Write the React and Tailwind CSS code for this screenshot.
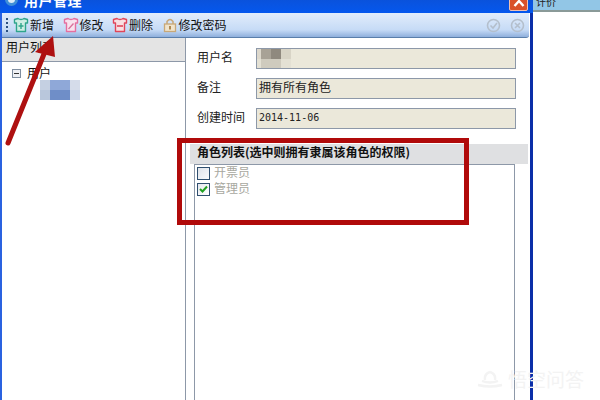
const ShirtIcon = ({ color, fill, children }) => (
  <svg width="16" height="16" viewBox="0 0 16 16" className="shrink-0">
    <path d="M1.5 2.5 L5 1.5 Q8 3.5 11 1.5 L14.5 2.5 L14.5 6 L12.5 6 L12.5 14.5 L3.5 14.5 L3.5 6 L1.5 6 Z" fill={fill} stroke={color} strokeWidth="1.4" strokeLinejoin="round" />
    {children}
  </svg>
);

const ToolButton = ({ icon, label }) => (
  <div className="flex items-center gap-[1px]">
    {icon}
    <span className="text-[12px] leading-none text-[#111]">{label}</span>
  </div>
);

const Field = ({ label, children }) => (
  <div className="flex items-center h-[21px]">
    <span className="w-[59px] text-[12px] leading-none pb-[3px] text-[#222]">{label}</span>
    <div className="w-[260px] h-[21px] bg-[#ebe8da] border border-[#8d98a8] px-[2px] flex items-center text-[12px] leading-none text-[#222] overflow-hidden">
      {children}
    </div>
  </div>
);

const Mosaic = ({ cols, size, cells }) => (
  <div className="grid" style={{ gridTemplateColumns: `repeat(${cols}, ${size}px)`, gridAutoRows: `${size}px` }}>
    {cells.map((c, i) => (
      <div key={i} style={{ background: c }} />
    ))}
  </div>
);

export default function App() {
  return (
    <div className="relative w-[600px] h-[400px] overflow-hidden bg-white flex" style={{ fontFamily: '"Noto Sans CJK SC", "Liberation Sans", sans-serif' }}>
      {/* dialog window */}
      <div className="w-[533px] h-full flex flex-col bg-white border-l-2 border-l-[#2a62e0] border-r-[3px] border-r-[#0a2ea8]">
        {/* title bar */}
        <div className="h-[13px] shrink-0 -ml-[2px] -mr-[3px] bg-gradient-to-b from-[#0a52dc] to-[#0458ee] flex items-start overflow-hidden relative">
          <div className="ml-[5px] -mt-[7px] w-[13px] h-[13px] shrink-0 rounded-full bg-[#dcebf8] border-[3px] border-[#3f8fd8]" />
          <span className="ml-[6px] text-[14px] leading-[14px] -mt-[7px] font-bold text-white tracking-[0.5px]">用户管理</span>
          <div className="absolute left-[509px] top-[-6px] w-[19px] h-[17px] rounded-[2px] bg-[#d9512a] border border-[#f0c0b0] flex items-center justify-center">
            <svg width="12" height="9" viewBox="0 0 12 9"><path d="M1.5 8 L6 3 L10.5 8" fill="none" stroke="#fff" strokeWidth="2.4" /></svg>
          </div>
        </div>

        {/* toolbar */}
        <div className="h-[25px] shrink-0 mr-[1px] flex items-center pl-[4px] pr-[4px] rounded-br-[3px] border-b border-b-[#5a7eaa] bg-gradient-to-b from-[#e2edfb] via-[#c6dbf6] via-70% to-[#8fafdc]">
          <div className="flex flex-col gap-[2px] mr-[5px]">
            <div className="w-[2px] h-[2px] bg-[#2a4f80]" />
            <div className="w-[2px] h-[2px] bg-[#2a4f80]" />
            <div className="w-[2px] h-[2px] bg-[#2a4f80]" />
            <div className="w-[2px] h-[2px] bg-[#2a4f80]" />
          </div>
          <div className="flex items-center gap-[8.5px]">
            <ToolButton label="新增" icon={
              <ShirtIcon color="#2fa58c" fill="#cfeee4"><path d="M8 6 V12 M5.5 9 H10.5" stroke="#2fa58c" strokeWidth="1.4" /></ShirtIcon>
            } />
            <ToolButton label="修改" icon={
              <ShirtIcon color="#e56fa0" fill="#f8e3ee"><path d="M5.5 12 L10.5 6.5" stroke="#d8709a" strokeWidth="1.3" /></ShirtIcon>
            } />
            <ToolButton label="删除" icon={
              <ShirtIcon color="#e0455a" fill="#f8dfe2"><path d="M5 9 H11" stroke="#e0455a" strokeWidth="1.6" /></ShirtIcon>
            } />
            <ToolButton label="修改密码" icon={
              <svg width="16" height="16" viewBox="0 0 16 16" className="shrink-0">
                <path d="M5 7 V4.5 Q8 0.5 11 4.5 V7" fill="none" stroke="#c8a878" strokeWidth="1.5" />
                <rect x="2.5" y="7" width="11" height="7.5" fill="#f0e4cc" stroke="#c8a878" strokeWidth="1.3" />
                <rect x="7" y="9" width="2" height="3.5" fill="#b08a50" />
              </svg>
            } />
          </div>
          <div className="ml-auto flex items-center gap-[9px]">
            <svg width="15" height="15" viewBox="0 0 15 15"><circle cx="7.5" cy="7.5" r="6" fill="none" stroke="#b4bfcc" strokeWidth="1.6" /><path d="M4.5 7.5 L7 10 L11 5" fill="none" stroke="#b4bfcc" strokeWidth="1.6" /></svg>
            <svg width="15" height="15" viewBox="0 0 15 15"><circle cx="7.5" cy="7.5" r="6" fill="none" stroke="#b4bfcc" strokeWidth="1.6" /><path d="M5 5 L10 10 M10 5 L5 10" stroke="#b4bfcc" strokeWidth="1.6" /></svg>
          </div>
        </div>

        {/* body */}
        <div className="flex-1 flex min-h-0">
          {/* user tree */}
          <div className="w-[184px] shrink-0 flex flex-col border-r border-r-[#8d98a8]">
            <div className="h-[24px] shrink-0 bg-[#e4e4e4] border-b border-b-[#8d98a8] pl-[4px] pb-[5px] flex items-center text-[12px] leading-none text-[#111]">用户列表</div>
            <div className="flex-1 pl-[10px] pt-[4px]">
              <div className="flex items-center gap-[6px] h-[14px]">
                <div className="w-[9px] h-[9px] border border-[#7f8ea0] bg-[#eef0f4] flex items-center justify-center">
                  <div className="w-[5px] h-[1px] bg-[#333]" />
                </div>
                <span className="text-[12px] leading-none text-[#111]">用户</span>
              </div>
              <div className="ml-[28px]">
                <Mosaic cols={4} size={10} cells={[
                  '#c5d0e2', '#8fa8d8', '#8fa8d8', '#d5dcea',
                  '#b9c7dc', '#6f8ec8', '#6f8ec8', '#ccd6e8',
                ]} />
              </div>
            </div>
          </div>

          {/* detail pane */}
          <div className="flex-1 flex flex-col min-w-0 pt-[10px]">
            <div className="flex flex-col gap-[9px] pl-[11px]">
              <Field label="用户名">
                <div className="-ml-[8px]">
                  <Mosaic cols={5} size={10} cells={[
                    '#ddd8cc', '#a8a296', '#8f897e', '#d8d4c6', '#ebe8da',
                    '#e4e1d4', '#cfcbbe', '#cfcbbe', '#e4e1d4', '#ebe8da',
                  ]} />
                </div>
              </Field>
              <Field label="备注"><span className="pb-[3px]">拥有所有角色</span></Field>
              <Field label="创建时间">
                <span className="text-[10px] font-['DejaVu_Sans_Mono'] pb-[1px]">2014-11-06</span>
              </Field>
            </div>

            <div className="mt-[15px] flex-1 flex flex-col min-h-0 pl-[4px] pr-[2px]">
              <div className="h-[20px] shrink-0 bg-[#dfe0e2] pl-[7px] pb-[4px] flex items-center text-[12px] leading-none font-bold text-[#111]">角色列表(选中则拥有隶属该角色的权限)</div>
              <div className="flex-1 ml-[4px] mr-[13px] border-x border-t border-[#8d98a8] pl-[2px]">
                <div className="flex items-center gap-[4px] h-[16px]">
                  <div className="w-[13px] h-[13px] border border-[#2f4f6f] bg-gradient-to-br from-[#dfe3ea] to-[#fafbfc]" />
                  <span className="text-[12px] leading-none pb-[2px] text-[#a8a8a0]">开票员</span>
                </div>
                <div className="flex items-center gap-[4px] h-[16px]">
                  <div className="w-[13px] h-[13px] border border-[#2f4f6f] bg-gradient-to-br from-[#e6e8ee] to-white flex items-center justify-center">
                    <svg width="9" height="8" viewBox="0 0 9 8"><path d="M1 4 L3.5 6.5 L8 1.5" fill="none" stroke="#21a121" strokeWidth="2" /></svg>
                  </div>
                  <span className="text-[12px] leading-none pb-[2px] text-[#a8a8a0]">管理员</span>
                </div>
              </div>
            </div>
          </div>
        </div>
      </div>

      {/* window behind */}
      <div className="flex-1 flex flex-col">
        <div className="h-[12px] shrink-0 bg-[#92c6e6] border-b-2 border-b-[#8a9a98] overflow-hidden pl-[3px] text-[10px] leading-[4px] text-[#222]">计价</div>
      </div>

      {/* annotations */}
      <div className="absolute left-[177px] top-[138px] w-[292px] h-[87px] border-[5px] border-[#b00a0a]" />
      <svg className="absolute left-0 top-0 pointer-events-none" width="120" height="160" viewBox="0 0 120 160">
        <path d="M8 143 L44 54" fill="none" stroke="#ae1010" strokeWidth="5" strokeLinecap="round" />
        <path d="M53 36 L35 52 L55 57 Z" fill="#ae1010" />
      </svg>

      {/* watermark */}
      <div className="absolute left-[477px] top-[369px] flex items-center gap-[5px] text-[19px] leading-none text-[#f3f3f3]">
        <svg width="26" height="18" viewBox="0 0 26 18"><path d="M1 15 Q13 18 25 15 M5 11 Q13 14 21 11 M13 2 Q7 4 8 10 M13 2 Q19 4 18 10" fill="none" stroke="#f3f3f3" strokeWidth="2.4" /></svg>
        <span>悟空问答</span>
      </div>
    </div>
  );
}
